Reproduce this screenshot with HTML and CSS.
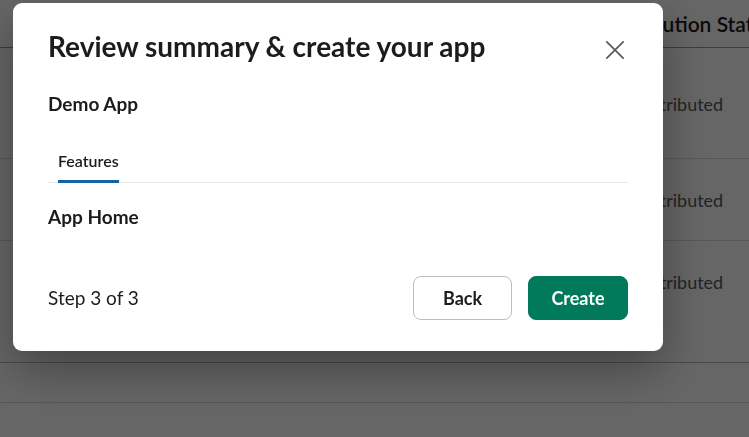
FILE: index.html
```html
<!DOCTYPE html>
<html lang="en">
<head>
<meta charset="utf-8">
<title>Review summary</title>
<link rel="stylesheet" href="styles.css">
</head>
<body>
<div class="page">
  <div class="thead">
    <div class="head-text">Distribution Status</div>
  </div>
  <div class="row row-first"><div class="cell-status">Not distributed</div></div>
  <div class="row row-second"><div class="cell-status">Not distributed</div></div>
  <div class="row row-third"><div class="cell-status">Not distributed</div></div>
  <div class="row row-fourth"></div>
  <div class="row row-last"></div>
</div>

<div class="overlay">
  <div class="modal" role="dialog" aria-labelledby="modal-title">
    <div class="modal-header">
      <h1 class="modal-title" id="modal-title">Review summary &amp; create your app</h1>
      <button class="close-btn" aria-label="Close">
        <svg width="20" height="20" viewBox="0 0 20 20" aria-hidden="true">
          <path d="M1.8 1.8 L18.2 18.2 M18.2 1.8 L1.8 18.2" stroke="#5a5a5a" stroke-width="1.7" stroke-linecap="round" fill="none"/>
        </svg>
      </button>
    </div>
    <div class="modal-body">
      <div class="app-name">Demo App</div>
      <div class="tabs">
        <div class="tab tab-active">Features</div>
      </div>
      <div class="feature">App Home</div>
    </div>
    <div class="modal-footer">
      <div class="step">Step 3 of 3</div>
      <div class="actions">
        <button class="btn btn-secondary">Back</button>
        <button class="btn btn-primary">Create</button>
      </div>
    </div>
  </div>
</div>
</body>
</html>
```

FILE: styles.css
```css
* { box-sizing: border-box; }

html, body {
  margin: 0;
  padding: 0;
  width: 749px;
  height: 437px;
  overflow: hidden;
  background: #ffffff;
  font-family: "Lato", "Liberation Sans", sans-serif;
  color: #1d1c1d;
}

/* background table */
.page {
  display: flex;
  flex-direction: column;
  width: 749px;
  height: 437px;
  overflow: hidden;
}

.thead {
  flex: none;
  height: 48px;
  border-bottom: 1px solid #969696;
  display: flex;
  align-items: center;
  overflow: hidden;
}

.head-text {
  margin-left: 600px;
  white-space: nowrap;
  font-size: 21px;
  line-height: 26px;
  font-weight: 600;
  color: #1d1c1d;
}

.cell-status {
  margin-left: 603px;
  white-space: nowrap;
  font-size: 18px;
  line-height: 24px;
  color: #5a595a;
}

.row {
  flex: none;
  display: flex;
  align-items: flex-start;
  padding-top: 29px;
  border-bottom: 1px solid #dcdcdc;
}

.row-first { height: 111px; padding-top: 44px; }
.row-second { height: 82px; }
.row-third { height: 122px; border-bottom-color: #b8b8b8; }
.row-fourth { height: 40px; }
.row-last { flex: 1; border-bottom: none; }

/* overlay + modal */
.overlay {
  position: fixed;
  inset: 0;
  background: rgba(0, 0, 0, 0.6);
  padding: 3px 0 0 13px;
}

.modal {
  width: 650px;
  background: #ffffff;
  border-radius: 9px;
  box-shadow: 0 18px 48px rgba(0, 0, 0, 0.35);
  display: flex;
  flex-direction: column;
  padding: 25px 35px 31px 35px;
}

.modal-header {
  display: flex;
  align-items: flex-start;
  justify-content: space-between;
}

.modal-title {
  margin: 0;
  font-size: 28px;
  line-height: 36px;
  font-weight: 700;
  color: #1d1c1d;
}

.close-btn {
  width: 36px;
  height: 36px;
  margin-top: 4px;
  margin-right: -5px;
  padding: 0;
  border: none;
  background: transparent;
  display: flex;
  align-items: center;
  justify-content: center;
}

.modal-body {
  display: flex;
  flex-direction: column;
}

.app-name {
  margin-top: 24px;
  font-size: 19px;
  line-height: 24px;
  font-weight: 700;
}

.tabs {
  margin-top: 35px;
  display: flex;
  border-bottom: 1px solid #e8e8e8;
}

.tab {
  margin-left: 10px;
  margin-bottom: -1px;
  padding-bottom: 9px;
  font-size: 16px;
  line-height: 20px;
  font-weight: 600;
  color: #1d1c1d;
}

.tab-active {
  border-bottom: 3px solid #1264a3;
}

.feature {
  margin-top: 22px;
  font-size: 19px;
  line-height: 24px;
  font-weight: 700;
}

.modal-footer {
  margin-top: 47px;
  display: flex;
  align-items: center;
  justify-content: space-between;
}

.step {
  font-size: 19px;
  line-height: 24px;
  font-weight: 400;
}

.actions {
  display: flex;
  gap: 16px;
}

.btn {
  height: 44px;
  min-width: 99px;
  padding: 0 16px;
  border-radius: 8px;
  font-family: "Lato", "Liberation Sans", sans-serif;
  font-size: 18px;
  font-weight: 700;
  cursor: pointer;
}

.btn-secondary {
  background: #ffffff;
  color: #1d1c1d;
  border: 1px solid #bdbdbd;
}

.btn-primary {
  min-width: 100px;
  background: #007a5a;
  color: #ffffff;
  border: 1px solid #007a5a;
}
```
